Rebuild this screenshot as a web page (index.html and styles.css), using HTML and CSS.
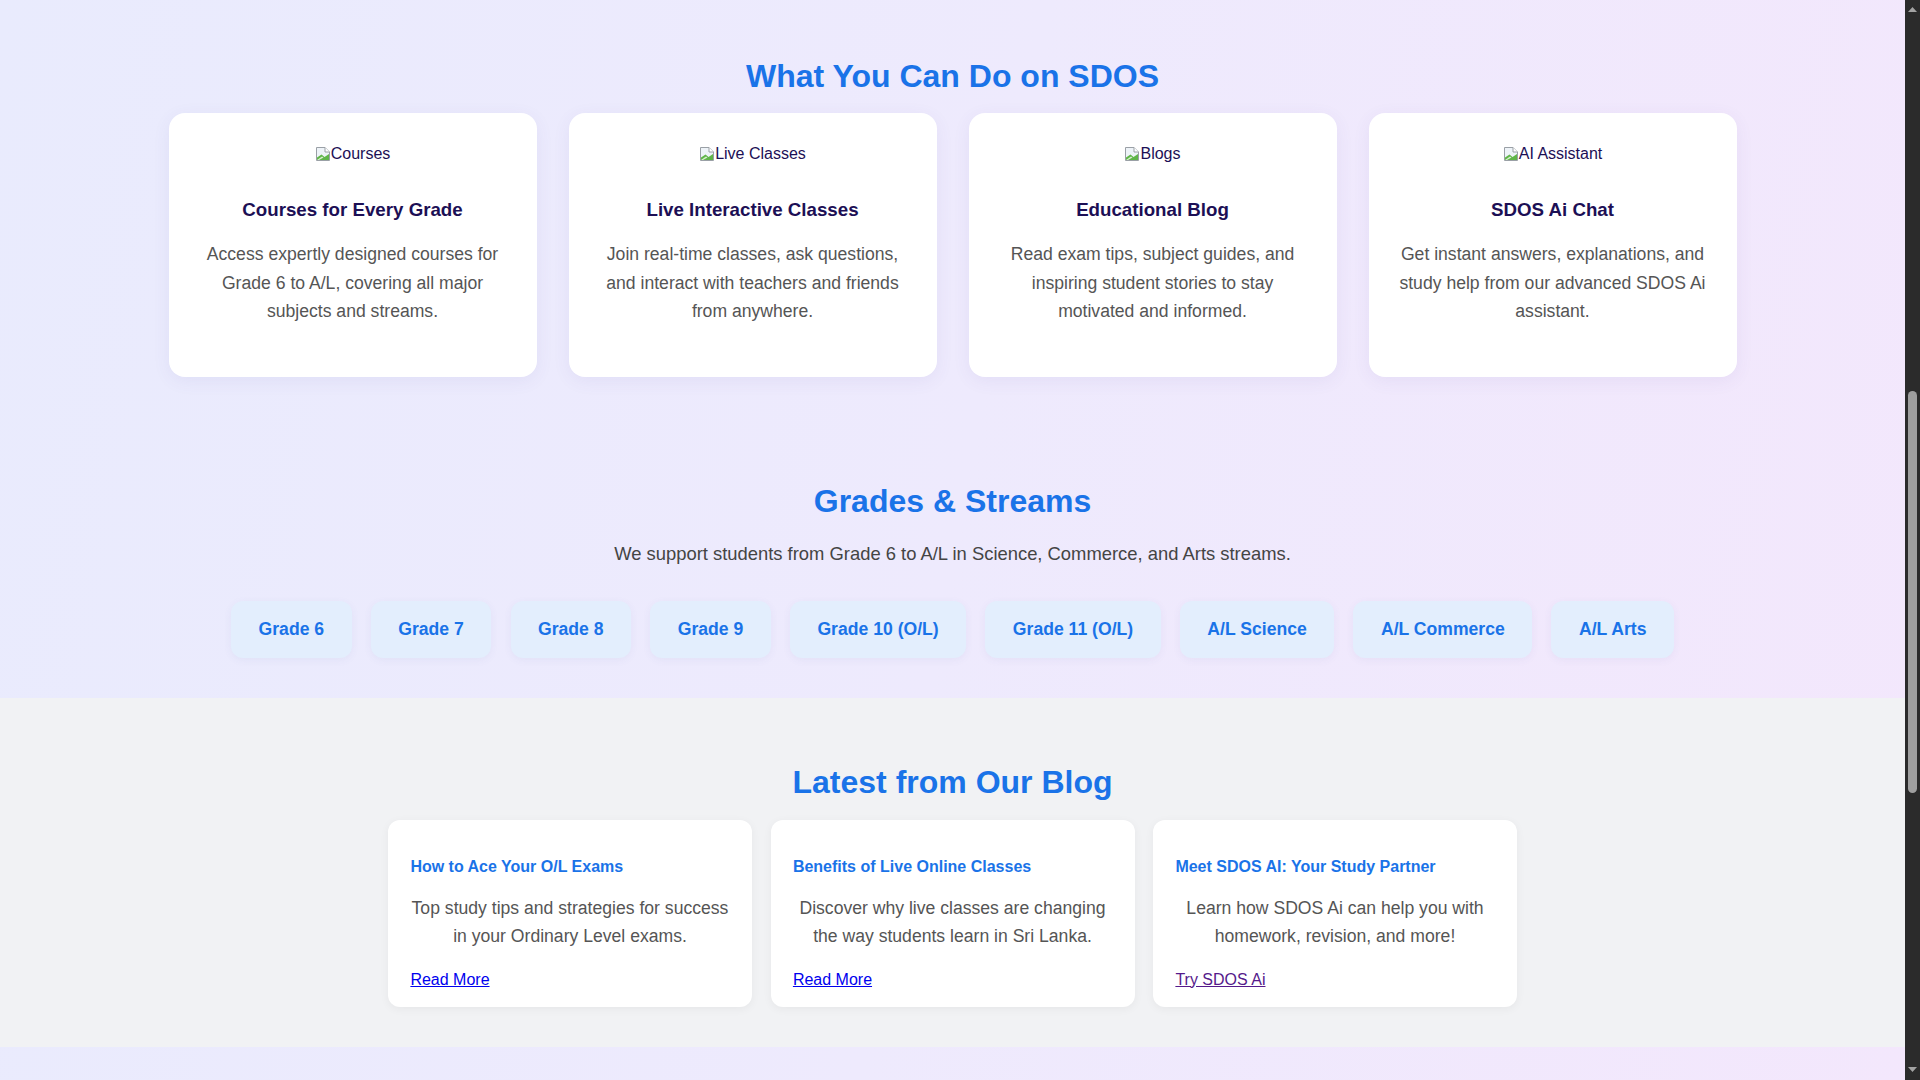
FILE: index.html
```html
<!DOCTYPE html>
<html lang="en">
<head>
<meta charset="utf-8">
<title>SDOS</title>
<link rel="stylesheet" href="styles.css">
</head>
<body>
<div class="page">
  <section class="features">
    <h2 class="section-title">What You Can Do on SDOS</h2>
    <div class="feature-grid">
      <div class="feature-card">
        <div class="thumb"><svg class="broken" width="16" height="16" viewBox="0 0 16 16"><path d="M1.5 1.5h8.5l4.5 4.5v8.5h-13z" fill="#eef3f8" stroke="#9aa0a6"/><path d="M10 1.5v4.5h4.5" fill="#fff" stroke="#9aa0a6"/><path d="M2 14V11.5l4.5-3 3 2.5 4.5-3V14z" fill="#5fb548"/><path d="M2 14l5-3.5 1.5 1L4 14z" fill="#d8efcf"/></svg><span>Courses</span></div>
        <h3>Courses for Every Grade</h3>
        <p>Access expertly designed courses for Grade 6 to A/L, covering all major subjects and streams.</p>
      </div>
      <div class="feature-card">
        <div class="thumb"><svg class="broken" width="16" height="16" viewBox="0 0 16 16"><path d="M1.5 1.5h8.5l4.5 4.5v8.5h-13z" fill="#eef3f8" stroke="#9aa0a6"/><path d="M10 1.5v4.5h4.5" fill="#fff" stroke="#9aa0a6"/><path d="M2 14V11.5l4.5-3 3 2.5 4.5-3V14z" fill="#5fb548"/><path d="M2 14l5-3.5 1.5 1L4 14z" fill="#d8efcf"/></svg><span>Live Classes</span></div>
        <h3>Live Interactive Classes</h3>
        <p>Join real-time classes, ask questions, and interact with teachers and friends from anywhere.</p>
      </div>
      <div class="feature-card">
        <div class="thumb"><svg class="broken" width="16" height="16" viewBox="0 0 16 16"><path d="M1.5 1.5h8.5l4.5 4.5v8.5h-13z" fill="#eef3f8" stroke="#9aa0a6"/><path d="M10 1.5v4.5h4.5" fill="#fff" stroke="#9aa0a6"/><path d="M2 14V11.5l4.5-3 3 2.5 4.5-3V14z" fill="#5fb548"/><path d="M2 14l5-3.5 1.5 1L4 14z" fill="#d8efcf"/></svg><span>Blogs</span></div>
        <h3>Educational Blog</h3>
        <p>Read exam tips, subject guides, and inspiring student stories to stay motivated and informed.</p>
      </div>
      <div class="feature-card">
        <div class="thumb"><svg class="broken" width="16" height="16" viewBox="0 0 16 16"><path d="M1.5 1.5h8.5l4.5 4.5v8.5h-13z" fill="#eef3f8" stroke="#9aa0a6"/><path d="M10 1.5v4.5h4.5" fill="#fff" stroke="#9aa0a6"/><path d="M2 14V11.5l4.5-3 3 2.5 4.5-3V14z" fill="#5fb548"/><path d="M2 14l5-3.5 1.5 1L4 14z" fill="#d8efcf"/></svg><span>AI Assistant</span></div>
        <h3>SDOS Ai Chat</h3>
        <p>Get instant answers, explanations, and study help from our advanced SDOS Ai assistant.</p>
      </div>
    </div>
  </section>

  <section class="grades">
    <h2 class="section-title">Grades &amp; Streams</h2>
    <p class="grades-intro">We support students from Grade 6 to A/L in Science, Commerce, and Arts streams.</p>
    <div class="grade-list">
      <div class="grade-chip">Grade 6</div>
      <div class="grade-chip">Grade 7</div>
      <div class="grade-chip">Grade 8</div>
      <div class="grade-chip">Grade 9</div>
      <div class="grade-chip">Grade 10 (O/L)</div>
      <div class="grade-chip">Grade 11 (O/L)</div>
      <div class="grade-chip">A/L Science</div>
      <div class="grade-chip">A/L Commerce</div>
      <div class="grade-chip">A/L Arts</div>
    </div>
  </section>

  <section class="blog">
    <h2 class="section-title">Latest from Our Blog</h2>
    <div class="blog-list">
      <div class="blog-card">
        <h3>How to Ace Your O/L Exams</h3>
        <p>Top study tips and strategies for success in your Ordinary Level exams.</p>
        <div class="blog-link"><a href="#" class="link">Read More</a></div>
      </div>
      <div class="blog-card">
        <h3>Benefits of Live Online Classes</h3>
        <p>Discover why live classes are changing the way students learn in Sri Lanka.</p>
        <div class="blog-link"><a href="#" class="link">Read More</a></div>
      </div>
      <div class="blog-card">
        <h3>Meet SDOS AI: Your Study Partner</h3>
        <p>Learn how SDOS Ai can help you with homework, revision, and more!</p>
        <div class="blog-link"><a href="#" class="link visited">Try SDOS Ai</a></div>
      </div>
    </div>
  </section>
  <div class="after"></div>
</div>

<div class="scrollbar">
  <div class="sb-btn sb-up"><svg width="9" height="5" viewBox="0 0 9 5"><path d="M4.5 0L9 5H0z" fill="#a3a3a3"/></svg></div>
  <div class="sb-track"><div class="sb-thumb"></div></div>
  <div class="sb-btn sb-down"><svg width="9" height="5" viewBox="0 0 9 5"><path d="M0 0h9L4.5 5z" fill="#a3a3a3"/></svg></div>
</div>
</body>
</html>
```

FILE: styles.css
```css
html, body {
  margin: 0;
  padding: 0;
  height: 1080px;
  overflow: hidden;
}

body {
  display: flex;
  font-family: "Liberation Sans", Arial, sans-serif;
  background: #2b2b2b;
}

.page {
  flex: 1;
  min-width: 0;
  display: flex;
  flex-direction: column;
  background: linear-gradient(100deg, #e9ebfd 0%, #eeeafd 50%, #f3e7fc 100%);
  overflow: hidden;
}

.section-title {
  margin: 26.6px 0 18.6px;
  font-size: 32px;
  font-weight: 700;
  line-height: normal;
  color: #1a73e8;
  text-align: center;
}

/* Features */
.features {
  padding: 31px 40px 39.3px;
}

.feature-grid {
  display: flex;
  justify-content: center;
  gap: 32px;
}

.feature-card {
  box-sizing: border-box;
  width: 368px;
  height: 264px;
  padding: 32px 24px 0;
  background: #ffffff;
  border-radius: 16px;
  box-shadow: 0 4px 18px rgba(80, 70, 160, 0.07);
  text-align: center;
  color: #1c0f55;
}

.thumb {
  display: flex;
  justify-content: center;
  align-items: flex-start;
  height: 20px;
  font-size: 16px;
  line-height: 18px;
  color: #1c0f55;
}

.thumb .broken {
  margin-top: 0.5px;
  flex: none;
}

.feature-card h3 {
  margin: 33.5px 0 19.8px;
  font-size: 18.72px;
  font-weight: 700;
  line-height: normal;
  color: #1c0f55;
}

.feature-card p {
  margin: 0;
  font-size: 17.6px;
  line-height: 1.6;
  color: #555555;
}

/* Grades */
.grades {
  padding: 40px 40px 39.6px;
  text-align: center;
}

.grades-intro {
  margin: 19px 0 32px;
  font-size: 18.4px;
  line-height: 1.6;
  color: #444444;
}

.grade-list {
  display: flex;
  justify-content: center;
  flex-wrap: wrap;
  gap: 19.2px;
}

.grade-chip {
  padding: 18.25px 27.5px;
  font-size: 17.6px;
  font-weight: 700;
  line-height: normal;
  color: #1a73e8;
  background: #e3eefd;
  border-radius: 12px;
  box-shadow: 0 2px 8px rgba(60, 80, 160, 0.06);
}

/* Blog */
.blog {
  padding: 40px 40px 40px;
  background: #f1f2f4;
}

.blog .section-title {
  margin-top: 26.6px;
  margin-bottom: 18.9px;
}

.blog-list {
  display: flex;
  justify-content: center;
  gap: 18.5px;
}

.blog-card {
  box-sizing: border-box;
  width: 364px;
  padding: 22.4px 22.4px 18.5px;
  background: #ffffff;
  border-radius: 12px;
  box-shadow: 0 2px 10px rgba(0, 0, 0, 0.05);
}

.blog-card h3 {
  margin: 16px 0 17.6px;
  font-size: 16px;
  font-weight: 700;
  line-height: normal;
  color: #1a73e8;
}

.blog-card p {
  margin: 0 0 20.4px;
  font-size: 17.6px;
  line-height: 1.6;
  color: #555555;
  text-align: center;
}

.blog-link {
  font-size: 16px;
  line-height: normal;
}

.link {
  color: #0000ee;
  text-decoration: underline;
}

.link.visited {
  color: #551a8b;
}

.after {
  flex: 1;
}

/* Scrollbar */
.scrollbar {
  width: 15px;
  flex: none;
  display: flex;
  flex-direction: column;
  background: #2b2b2b;
}

.sb-btn {
  height: 18px;
  display: flex;
  justify-content: center;
}

.sb-up {
  align-items: flex-start;
  padding-top: 7px;
  height: 11px;
}

.sb-down {
  align-items: flex-end;
  padding-bottom: 8px;
  height: 10px;
}

.sb-track {
  flex: 1;
  padding-top: 373px;
  display: flex;
  justify-content: center;
}

.sb-thumb {
  width: 9px;
  height: 402px;
  border-radius: 5px;
  background: #9f9f9f;
}
```
